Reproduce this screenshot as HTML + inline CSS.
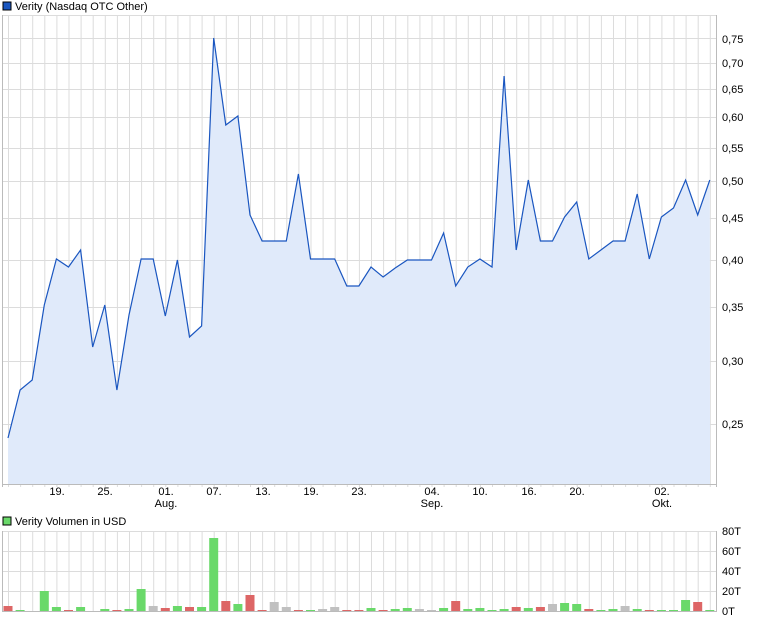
<!DOCTYPE html>
<html><head><meta charset="utf-8"><style>
body{margin:0;background:#fff;width:760px;height:620px;overflow:hidden;font-family:"Liberation Sans",sans-serif}
svg text{font-family:"Liberation Sans",sans-serif;font-size:11px;fill:#000}
</style></head><body>
<svg id="s" width="760" height="620" xmlns="http://www.w3.org/2000/svg">
<rect x="3" y="2" width="8" height="8" fill="#1a56c0" stroke="#000" stroke-width="1"/>
<text x="15" y="10">Verity (Nasdaq OTC Other)</text>
<rect x="3" y="517" width="8" height="8" fill="#6ad96a" stroke="#000" stroke-width="1"/>
<text x="15" y="525">Verity Volumen in USD</text>
<g id="g"></g>
<g text-anchor="start">
<text x="722" y="43">0,75</text><text x="722" y="67">0,70</text><text x="722" y="93">0,65</text>
<text x="722" y="121">0,60</text><text x="722" y="152">0,55</text><text x="722" y="185">0,50</text>
<text x="722" y="222">0,45</text><text x="722" y="264">0,40</text><text x="722" y="311">0,35</text>
<text x="722" y="365">0,30</text><text x="722" y="428">0,25</text>
<text x="722" y="535">80T</text><text x="722" y="555">60T</text><text x="722" y="575">40T</text>
<text x="722" y="595">20T</text><text x="722" y="615">0T</text>
</g>
<g text-anchor="middle">
<text x="57" y="495">19.</text><text x="105" y="495">25.</text><text x="166" y="495">01.</text><text x="166" y="507">Aug.</text>
<text x="214" y="495">07.</text><text x="263" y="495">13.</text><text x="311" y="495">19.</text><text x="359" y="495">23.</text>
<text x="432" y="495">04.</text><text x="432" y="507">Sep.</text><text x="480" y="495">10.</text><text x="529" y="495">16.</text>
<text x="577" y="495">20.</text><text x="662" y="495">02.</text><text x="662" y="507">Okt.</text>
</g>
</svg>
<script>
var g=document.getElementById('g'),h='';
var ys=[438,390,380,305,259,267,250,347,305,390,315,259,259,316,260,337,326,38,125,116,215,241,241,241,174,259,259,259,286,286,267,277,268,260,260,260,233,286,267,259,267,76,250,180,241,241,217,202,259,250,241,241,194,259,217,208,180,215,180];
var vol=[['r',5],['g',1],['',0],['g',20],['g',4],['r',1],['g',4],['',0],['g',2],['r',1],['g',2],['g',22],['y',5],['r',3],['g',5],['r',4],['g',4],['g',73],['r',10],['g',7],['r',16],['r',1],['y',9],['y',4],['r',1],['g',1],['y',2],['y',4],['r',1],['r',1],['g',3],['r',1],['g',2],['g',3],['y',2],['y',1],['g',3],['r',10],['g',2],['g',3],['g',1],['g',2],['r',4],['g',3],['r',4],['y',7],['g',8],['g',7],['r',2],['g',1],['g',2],['y',5],['g',2],['r',1],['g',1],['g',1],['g',11],['r',9],['g',1]];
var col={r:'#dd6666',g:'#6ad96a',y:'#c0c0c0'};
for(var x=8.5;x<716;x+=12.1){h+='<line x1="'+x+'" y1="15" x2="'+x+'" y2="487" stroke="#dcdcdc"/>';h+='<line x1="'+x+'" y1="531" x2="'+x+'" y2="611" stroke="#dcdcdc"/>';}
[15,38,63,89,117,148,181,218,260,307,361,424].forEach(function(y){h+='<line x1="2" y1="'+(y+.5)+'" x2="716" y2="'+(y+.5)+'" stroke="#dcdcdc"/>';});
[531,551,571,591].forEach(function(y){h+='<line x1="2" y1="'+(y+.5)+'" x2="716" y2="'+(y+.5)+'" stroke="#dcdcdc"/>';});
var pts=ys.map(function(y,i){return (8+i*12.1).toFixed(1)+','+y;}).join(' ');
h+='<polygon points="8,484 '+pts+' 710,484" fill="#e0eafa"/>';
h+='<polyline points="'+pts+'" fill="none" stroke="#1a56c0" stroke-width="1.2"/>';
vol.forEach(function(v,i){if(!v[0])return;var x=8+i*12.1;h+='<rect x="'+(x-4.5).toFixed(1)+'" y="'+(611-v[1])+'" width="9" height="'+v[1]+'" fill="'+col[v[0]]+'"/>';});
h+='<line x1="2.5" y1="15" x2="2.5" y2="487" stroke="#bbb"/><line x1="716.5" y1="15" x2="716.5" y2="487" stroke="#bbb"/><line x1="2" y1="484.5" x2="717" y2="484.5" stroke="#bbb"/>';
h+='<line x1="2.5" y1="531" x2="2.5" y2="612" stroke="#bbb"/><line x1="716.5" y1="531" x2="716.5" y2="612" stroke="#bbb"/><line x1="2" y1="611.5" x2="717" y2="611.5" stroke="#bbb"/>';
g.innerHTML=h;
</script>
</body></html>
